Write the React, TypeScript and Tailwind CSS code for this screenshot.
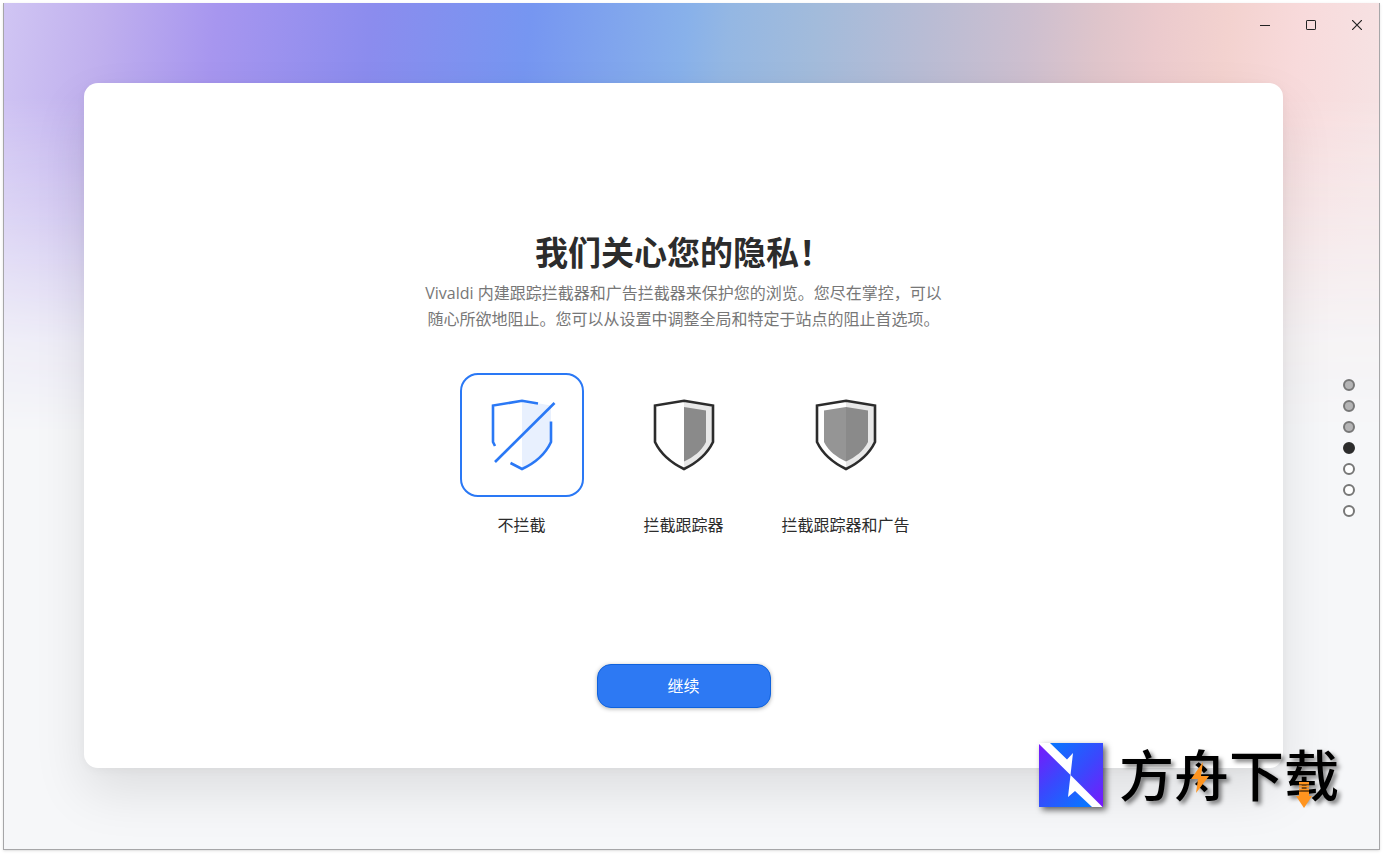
import { useState } from "react";

function OpenShield() {
  return (
    <svg viewBox="0 0 68 74" className="h-[74px] w-[68px]" fill="none" aria-hidden="true">
      <path d="M34 2.500 63 7.500V43C58 54 46 66 34 69.500Z" fill="#e8f0fe" />
      <path
        d="M50 5.500 34 2.800 5 7.500V44L7 48M22.500 65 34 71C46 65.500 57 57 63 44V23.500"
        stroke="#2a78f5"
        strokeWidth="2.600"
      />
      <path d="M7 64 66.500 5" stroke="#2a78f5" strokeWidth="2.600" />
    </svg>
  );
}

function Shield({ full }: { full: boolean }) {
  return (
    <svg viewBox="0 0 68 74" className="h-[74px] w-[68px]" fill="none" aria-hidden="true">
      <path d="M34 2.800 63 7.500V44C57 56.500 46.500 65 34 71Z" fill="#e8e8e8" />
      <path d="M34 9 56 12.500V44C51 53.500 43.500 59 34 63.500Z" fill="#8a8a8a" />
      {full && <path d="M34 9 12 12.500V44C17 53.500 24.500 59 34 63.500Z" fill="#959595" />}
      <path
        d="M34 2.800 63 7.500V44C57 56.500 46.500 65 34 71 21.500 65 11 56.500 5 44V7.500Z"
        stroke="#2c2c2c"
        strokeWidth="2.600"
      />
    </svg>
  );
}

const OPTIONS = [
  { id: "none", label: "不拦截", icon: <OpenShield /> },
  { id: "trackers", label: "拦截跟踪器", icon: <Shield full={false} /> },
  { id: "all", label: "拦截跟踪器和广告", icon: <Shield full /> },
];

const STEPS = ["done", "done", "done", "current", "todo", "todo", "todo"];
const STEP_STYLE: Record<string, string> = {
  done: "border-[#777] bg-[#b4b4b5]",
  current: "border-[#2c2c2c] bg-[#2c2c2c]",
  todo: "border-[#777] bg-white",
};

function WindowControls() {
  const cell = "flex h-11 w-[46px] items-center justify-center pl-[2px]";
  return (
    <div className="flex h-20 justify-end text-[#222]">
      <button className={cell} aria-label="最小化">
        <svg className="size-[10px]" viewBox="0 0 10 10" stroke="currentColor"><path d="M0 5.500H10" /></svg>
      </button>
      <button className={cell} aria-label="最大化">
        <svg className="size-[10px]" viewBox="0 0 10 10" stroke="currentColor" fill="none"><rect x=".5" y=".5" width="9" height="9" rx=".6" /></svg>
      </button>
      <button className={cell} aria-label="关闭">
        <svg className="size-[10px]" viewBox="0 0 10 10" stroke="currentColor" strokeWidth="1.200"><path d="M0 0 10 10M10 0 0 10" /></svg>
      </button>
    </div>
  );
}

function Brand() {
  return (
    <div className="absolute right-[40px] bottom-[42px] flex items-center gap-4">
      <svg viewBox="0 0 64 64" className="size-16 drop-shadow-[3px_3px_3px_rgba(0,0,0,0.6)]" aria-hidden="true">
        <defs>
          <linearGradient id="lower" x1="0" y1="0" x2=".8" y2="1">
            <stop offset="0" stopColor="#7a18fb" />
            <stop offset=".5" stopColor="#3a48fd" />
            <stop offset="1" stopColor="#0b74ff" />
          </linearGradient>
          <linearGradient id="upper" x1=".1" y1="0" x2="1" y2="1">
            <stop offset="0" stopColor="#0b74ff" />
            <stop offset=".5" stopColor="#3a48fd" />
            <stop offset="1" stopColor="#7a18fb" />
          </linearGradient>
        </defs>
        <rect width="64" height="64" fill="#fff" />
        <path d="M0 1 31.500 32 29 54 36 48 53 64H0Z" fill="url(#lower)" />
        <path d="M11 0 28 16.500 34 10 31.500 32 63.500 64H64V0Z" fill="url(#upper)" />
      </svg>
      <div className="relative">
        <span className="block text-[55px] leading-[64px] font-medium text-black [text-shadow:3px_3px_4px_rgba(0,0,0,0.5)]">
          方舟下载
        </span>
        <svg viewBox="0 0 220 64" className="absolute inset-0 size-full overflow-visible" fill="#ff941f" aria-hidden="true">
          <path d="M84 19 72 36H79L77 50 90 33H82Z" />
          <path d="M180 39H190V41.500H180ZM180 42.500H190V44.500H180ZM180 45.500H190V47.500H180ZM180 48.500H190V53H193L185 65 177 53H180Z" />
        </svg>
      </div>
    </div>
  );
}

export default function App() {
  const [selected, setSelected] = useState("none");
  return (
    <div className="flex min-h-screen bg-white pt-[3px] pr-1 pb-1 pl-[3px] font-['Open_Sans','Noto_Sans_CJK_SC',sans-serif]">
      <main className="relative flex flex-1 flex-col overflow-hidden border border-t-0 border-[#a6a6a8] bg-[#f6f7f9] shadow-sm">
        <div
          className="absolute inset-x-0 top-0 h-[430px] bg-[linear-gradient(97deg,#d0c5f3_0%,#c0b0ee_7%,#a796ef_15%,#8b8cee_26%,#7696f1_37%,#88b1ea_48%,#94b7e3_51%,#a2bbdb_57%,#b9bcd4_65%,#cdbfcf_72%,#dfc5cb_77%,#ebcacd_81%,#f3d2cf_86%,#f8dadb_91%,#f6e2e3_97%)] [mask-image:linear-gradient(#000_0%,#000_22%,rgba(0,0,0,0.6)_50%,rgba(0,0,0,0.15)_78%,transparent_100%)]"
        />
        <div className="relative flex flex-1 flex-col">
          <WindowControls />
          <div className="flex flex-1 pb-[81px] pl-20">
            <section className="flex flex-1 flex-col items-center rounded-[14px] bg-white pt-[145px] pb-[60px] shadow-[0_24px_52px_rgba(0,0,0,0.1),0_2px_10px_rgba(0,0,0,0.04)]">
              <h1 className="text-[33px] leading-[50px] font-bold text-[#2c2c2c]">我们关心您的隐私！</h1>
              <p className="mt-[2px] text-center text-[16px] leading-[26px] text-[#777]">
                Vivaldi 内建跟踪拦截器和广告拦截器来保护您的浏览。您尽在掌控，可以
                <br />
                随心所欲地阻止。您可以从设置中调整全局和特定于站点的阻止首选项。
              </p>
              <div className="mt-[41px] flex" role="radiogroup" aria-label="拦截级别">
                {OPTIONS.map((o) => (
                  <label key={o.id} className="flex w-[162px] cursor-pointer flex-col items-center gap-[15px] text-[16px] leading-[26px] text-[#2c2c2c]">
                    <input
                      type="radio"
                      name="blocking"
                      className="peer sr-only"
                      checked={selected === o.id}
                      onChange={() => setSelected(o.id)}
                    />
                    <span className="flex size-[124px] items-center justify-center rounded-[18px] border-2 border-transparent peer-checked:border-[#2a78f5]">
                      {o.icon}
                    </span>
                    <span>{o.label}</span>
                  </label>
                ))}
              </div>
              <button className="mt-auto h-11 w-[174px] rounded-[14px] border border-[#0f62dd] bg-[#2d79f3] text-[16px] text-white shadow-[0_1px_4px_rgba(0,0,0,0.3)]">
                继续
              </button>
            </section>
            <nav className="flex w-24 flex-col items-center justify-center gap-[9px] pt-[45px] pl-[35px]" aria-label="步骤">
              {STEPS.map((s, i) => (
                <button key={i} aria-label={`步骤 ${i + 1}`} className={`size-3 rounded-full border-2 ${STEP_STYLE[s]}`} />
              ))}
            </nav>
          </div>
        </div>
        <Brand />
      </main>
    </div>
  );
}
